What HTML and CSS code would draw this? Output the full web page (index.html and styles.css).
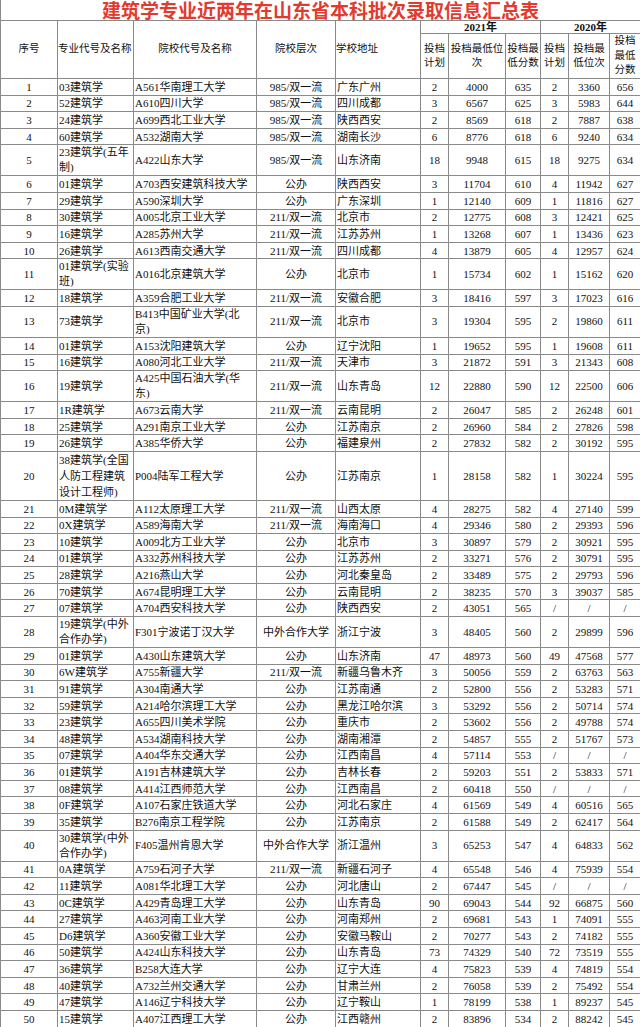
FILE: index.html
```html
<!DOCTYPE html>
<html lang="zh-CN">
<head>
<meta charset="utf-8">
<title>建筑学专业近两年在山东省本科批次录取信息汇总表</title>
<link rel="stylesheet" href="styles.css">
</head>
<body>
<table class="sheet">
<colgroup>
<col class="c-no"><col class="c-major"><col class="c-school"><col class="c-level"><col class="c-addr">
<col class="c-plan"><col class="c-rank"><col class="c-score">
<col class="c-plan"><col class="c-rank2"><col class="c-score2">
</colgroup>
<thead>
<tr class="title-row"><th colspan="11" class="title">建筑学专业近两年在山东省本科批次录取信息汇总表</th></tr>
<tr class="hd1">
<th rowspan="2">序号</th>
<th rowspan="2" class="l">专业代号及名称</th>
<th rowspan="2">院校代号及名称</th>
<th rowspan="2">院校层次</th>
<th rowspan="2" class="l">学校地址</th>
<th colspan="3" class="yr">2021年</th>
<th colspan="3" class="yr">2020年</th>
</tr>
<tr class="hd2">
<th>投档计划</th><th>投档最低位次</th><th>投档最低分数</th>
<th>投档计划</th><th>投档最低位次</th><th>投档最低分数</th>
</tr>
</thead>
<tbody>
<tr><td>1</td><td class="l">03建筑学</td><td class="l">A561华南理工大学</td><td>985/双一流</td><td class="l">广东广州</td><td>2</td><td>4000</td><td>635</td><td>2</td><td>3360</td><td>656</td></tr>
<tr><td>2</td><td class="l">52建筑学</td><td class="l">A610四川大学</td><td>985/双一流</td><td class="l">四川成都</td><td>3</td><td>6567</td><td>625</td><td>3</td><td>5983</td><td>644</td></tr>
<tr><td>3</td><td class="l">24建筑学</td><td class="l">A699西北工业大学</td><td>985/双一流</td><td class="l">陕西西安</td><td>2</td><td>8569</td><td>618</td><td>2</td><td>7887</td><td>638</td></tr>
<tr><td>4</td><td class="l">60建筑学</td><td class="l">A532湖南大学</td><td>985/双一流</td><td class="l">湖南长沙</td><td>6</td><td>8776</td><td>618</td><td>6</td><td>9240</td><td>634</td></tr>
<tr class="r2"><td>5</td><td class="l">23建筑学(五年制)</td><td class="l">A422山东大学</td><td>985/双一流</td><td class="l">山东济南</td><td>18</td><td>9948</td><td>615</td><td>18</td><td>9275</td><td>634</td></tr>
<tr><td>6</td><td class="l">01建筑学</td><td class="l">A703西安建筑科技大学</td><td>公办</td><td class="l">陕西西安</td><td>3</td><td>11704</td><td>610</td><td>4</td><td>11942</td><td>627</td></tr>
<tr><td>7</td><td class="l">29建筑学</td><td class="l">A590深圳大学</td><td>公办</td><td class="l">广东深圳</td><td>1</td><td>12140</td><td>609</td><td>1</td><td>11816</td><td>627</td></tr>
<tr><td>8</td><td class="l">30建筑学</td><td class="l">A005北京工业大学</td><td>211/双一流</td><td class="l">北京市</td><td>2</td><td>12775</td><td>608</td><td>3</td><td>12421</td><td>625</td></tr>
<tr><td>9</td><td class="l">16建筑学</td><td class="l">A285苏州大学</td><td>211/双一流</td><td class="l">江苏苏州</td><td>1</td><td>13268</td><td>607</td><td>1</td><td>13436</td><td>623</td></tr>
<tr><td>10</td><td class="l">26建筑学</td><td class="l">A613西南交通大学</td><td>211/双一流</td><td class="l">四川成都</td><td>4</td><td>13879</td><td>605</td><td>4</td><td>12957</td><td>624</td></tr>
<tr class="r2"><td>11</td><td class="l">01建筑学(实验班)</td><td class="l">A016北京建筑大学</td><td>公办</td><td class="l">北京市</td><td>1</td><td>15734</td><td>602</td><td>1</td><td>15162</td><td>620</td></tr>
<tr><td>12</td><td class="l">18建筑学</td><td class="l">A359合肥工业大学</td><td>211/双一流</td><td class="l">安徽合肥</td><td>3</td><td>18416</td><td>597</td><td>3</td><td>17023</td><td>616</td></tr>
<tr class="r2"><td>13</td><td class="l">73建筑学</td><td class="l">B413中国矿业大学(北京)</td><td>211/双一流</td><td class="l">北京市</td><td>3</td><td>19304</td><td>595</td><td>2</td><td>19860</td><td>611</td></tr>
<tr><td>14</td><td class="l">01建筑学</td><td class="l">A153沈阳建筑大学</td><td>公办</td><td class="l">辽宁沈阳</td><td>1</td><td>19652</td><td>595</td><td>1</td><td>19608</td><td>611</td></tr>
<tr><td>15</td><td class="l">16建筑学</td><td class="l">A080河北工业大学</td><td>211/双一流</td><td class="l">天津市</td><td>3</td><td>21872</td><td>591</td><td>3</td><td>21343</td><td>608</td></tr>
<tr class="r2"><td>16</td><td class="l">19建筑学</td><td class="l">A425中国石油大学(华东)</td><td>211/双一流</td><td class="l">山东青岛</td><td>12</td><td>22880</td><td>590</td><td>12</td><td>22500</td><td>606</td></tr>
<tr><td>17</td><td class="l">1R建筑学</td><td class="l">A673云南大学</td><td>211/双一流</td><td class="l">云南昆明</td><td>2</td><td>26047</td><td>585</td><td>2</td><td>26248</td><td>601</td></tr>
<tr><td>18</td><td class="l">25建筑学</td><td class="l">A291南京工业大学</td><td>公办</td><td class="l">江苏南京</td><td>2</td><td>26960</td><td>584</td><td>2</td><td>27826</td><td>598</td></tr>
<tr><td>19</td><td class="l">26建筑学</td><td class="l">A385华侨大学</td><td>公办</td><td class="l">福建泉州</td><td>2</td><td>27832</td><td>582</td><td>2</td><td>30192</td><td>595</td></tr>
<tr class="r3"><td>20</td><td class="l">38建筑学(全国人防工程建筑设计工程师)</td><td class="l">P004陆军工程大学</td><td>公办</td><td class="l">江苏南京</td><td>1</td><td>28158</td><td>582</td><td>1</td><td>30224</td><td>595</td></tr>
<tr><td>21</td><td class="l">0M建筑学</td><td class="l">A112太原理工大学</td><td>211/双一流</td><td class="l">山西太原</td><td>4</td><td>28275</td><td>582</td><td>4</td><td>27140</td><td>599</td></tr>
<tr><td>22</td><td class="l">0X建筑学</td><td class="l">A589海南大学</td><td>211/双一流</td><td class="l">海南海口</td><td>4</td><td>29346</td><td>580</td><td>2</td><td>29393</td><td>596</td></tr>
<tr><td>23</td><td class="l">10建筑学</td><td class="l">A009北方工业大学</td><td>公办</td><td class="l">北京市</td><td>3</td><td>30897</td><td>579</td><td>2</td><td>30921</td><td>595</td></tr>
<tr><td>24</td><td class="l">01建筑学</td><td class="l">A332苏州科技大学</td><td>公办</td><td class="l">江苏苏州</td><td>2</td><td>33271</td><td>576</td><td>2</td><td>30791</td><td>595</td></tr>
<tr><td>25</td><td class="l">28建筑学</td><td class="l">A216燕山大学</td><td>公办</td><td class="l">河北秦皇岛</td><td>2</td><td>33489</td><td>575</td><td>2</td><td>29793</td><td>596</td></tr>
<tr><td>26</td><td class="l">70建筑学</td><td class="l">A674昆明理工大学</td><td>公办</td><td class="l">云南昆明</td><td>2</td><td>38235</td><td>570</td><td>3</td><td>39037</td><td>585</td></tr>
<tr><td>27</td><td class="l">07建筑学</td><td class="l">A704西安科技大学</td><td>公办</td><td class="l">陕西西安</td><td>2</td><td>43051</td><td>565</td><td>/</td><td>/</td><td>/</td></tr>
<tr class="r2"><td>28</td><td class="l">19建筑学(中外合作办学)</td><td class="l">F301宁波诺丁汉大学</td><td>中外合作大学</td><td class="l">浙江宁波</td><td>3</td><td>48405</td><td>560</td><td>2</td><td>29899</td><td>596</td></tr>
<tr><td>29</td><td class="l">01建筑学</td><td class="l">A430山东建筑大学</td><td>公办</td><td class="l">山东济南</td><td>47</td><td>48973</td><td>560</td><td>49</td><td>47568</td><td>577</td></tr>
<tr><td>30</td><td class="l">6W建筑学</td><td class="l">A755新疆大学</td><td>211/双一流</td><td class="l">新疆乌鲁木齐</td><td>3</td><td>50056</td><td>559</td><td>2</td><td>63763</td><td>563</td></tr>
<tr><td>31</td><td class="l">91建筑学</td><td class="l">A304南通大学</td><td>公办</td><td class="l">江苏南通</td><td>2</td><td>52800</td><td>556</td><td>2</td><td>53283</td><td>571</td></tr>
<tr><td>32</td><td class="l">59建筑学</td><td class="l">A214哈尔滨理工大学</td><td>公办</td><td class="l">黑龙江哈尔滨</td><td>3</td><td>53292</td><td>556</td><td>2</td><td>50714</td><td>574</td></tr>
<tr><td>33</td><td class="l">23建筑学</td><td class="l">A655四川美术学院</td><td>公办</td><td class="l">重庆市</td><td>2</td><td>53602</td><td>556</td><td>2</td><td>49788</td><td>574</td></tr>
<tr><td>34</td><td class="l">48建筑学</td><td class="l">A534湖南科技大学</td><td>公办</td><td class="l">湖南湘潭</td><td>2</td><td>54857</td><td>555</td><td>2</td><td>51767</td><td>573</td></tr>
<tr><td>35</td><td class="l">07建筑学</td><td class="l">A404华东交通大学</td><td>公办</td><td class="l">江西南昌</td><td>4</td><td>57114</td><td>553</td><td>/</td><td>/</td><td>/</td></tr>
<tr><td>36</td><td class="l">01建筑学</td><td class="l">A191吉林建筑大学</td><td>公办</td><td class="l">吉林长春</td><td>2</td><td>59203</td><td>551</td><td>2</td><td>53833</td><td>571</td></tr>
<tr><td>37</td><td class="l">08建筑学</td><td class="l">A414江西师范大学</td><td>公办</td><td class="l">江西南昌</td><td>2</td><td>60418</td><td>550</td><td>/</td><td>/</td><td>/</td></tr>
<tr><td>38</td><td class="l">0F建筑学</td><td class="l">A107石家庄铁道大学</td><td>公办</td><td class="l">河北石家庄</td><td>4</td><td>61569</td><td>549</td><td>4</td><td>60516</td><td>565</td></tr>
<tr><td>39</td><td class="l">35建筑学</td><td class="l">B276南京工程学院</td><td>公办</td><td class="l">江苏南京</td><td>2</td><td>61588</td><td>549</td><td>2</td><td>62417</td><td>564</td></tr>
<tr class="r2"><td>40</td><td class="l">30建筑学(中外合作办学)</td><td class="l">F405温州肯恩大学</td><td>中外合作大学</td><td class="l">浙江温州</td><td>3</td><td>65253</td><td>547</td><td>4</td><td>64833</td><td>562</td></tr>
<tr><td>41</td><td class="l">0A建筑学</td><td class="l">A759石河子大学</td><td>211/双一流</td><td class="l">新疆石河子</td><td>4</td><td>65548</td><td>546</td><td>4</td><td>75939</td><td>554</td></tr>
<tr><td>42</td><td class="l">11建筑学</td><td class="l">A081华北理工大学</td><td>公办</td><td class="l">河北唐山</td><td>2</td><td>67447</td><td>545</td><td>/</td><td>/</td><td>/</td></tr>
<tr><td>43</td><td class="l">0C建筑学</td><td class="l">A429青岛理工大学</td><td>公办</td><td class="l">山东青岛</td><td>90</td><td>69043</td><td>544</td><td>92</td><td>66875</td><td>560</td></tr>
<tr><td>44</td><td class="l">27建筑学</td><td class="l">A463河南工业大学</td><td>公办</td><td class="l">河南郑州</td><td>2</td><td>69681</td><td>543</td><td>1</td><td>74091</td><td>555</td></tr>
<tr><td>45</td><td class="l">D6建筑学</td><td class="l">A360安徽工业大学</td><td>公办</td><td class="l">安徽马鞍山</td><td>2</td><td>70277</td><td>543</td><td>2</td><td>74182</td><td>555</td></tr>
<tr><td>46</td><td class="l">50建筑学</td><td class="l">A424山东科技大学</td><td>公办</td><td class="l">山东青岛</td><td>73</td><td>74329</td><td>540</td><td>72</td><td>73519</td><td>555</td></tr>
<tr><td>47</td><td class="l">36建筑学</td><td class="l">B258大连大学</td><td>公办</td><td class="l">辽宁大连</td><td>4</td><td>75823</td><td>539</td><td>4</td><td>74819</td><td>554</td></tr>
<tr><td>48</td><td class="l">40建筑学</td><td class="l">A732兰州交通大学</td><td>公办</td><td class="l">甘肃兰州</td><td>2</td><td>76058</td><td>539</td><td>2</td><td>75492</td><td>554</td></tr>
<tr><td>49</td><td class="l">47建筑学</td><td class="l">A146辽宁科技大学</td><td>公办</td><td class="l">辽宁鞍山</td><td>1</td><td>78199</td><td>538</td><td>1</td><td>89237</td><td>545</td></tr>
<tr><td>50</td><td class="l">15建筑学</td><td class="l">A407江西理工大学</td><td>公办</td><td class="l">江西赣州</td><td>2</td><td>83896</td><td>534</td><td>2</td><td>88242</td><td>545</td></tr>
</tbody>
</table>
</body>
</html>
```
FILE: styles.css
```css
html, body {
  margin: 0;
  padding: 0;
  background: #ffffff;
}

body {
  font-family: "Liberation Serif", "Noto Sans CJK SC", serif;
  font-size: 11px;
  color: #111111;
}

.sheet {
  width: 640px;
  table-layout: fixed;
  border-collapse: collapse;
}

.c-no { width: 57px; }
.c-major { width: 76px; }
.c-school { width: 123px; }
.c-level { width: 79px; }
.c-addr { width: 85px; }
.c-plan { width: 28px; }
.c-rank { width: 57px; }
.c-score { width: 35px; }
.c-rank2 { width: 41px; }
.c-score2 { width: 31px; }

.sheet th,
.sheet td {
  border: 1px solid #8a8a8a;
  padding: 0 1px;
  text-align: center;
  vertical-align: middle;
  font-weight: normal;
  overflow: hidden;
}

.sheet td.l,
.sheet th.l {
  text-align: left;
}

.sheet th.l {
  padding: 0;
}

.sheet td:nth-child(3) {
  padding-right: 3px;
}

.sheet .title-row th.title {
  border-top: none;
  height: 19px;
  padding: 0;
  font-family: "Noto Sans CJK SC", sans-serif;
  font-size: 19px;
  line-height: 20px;
  font-weight: bold;
  color: #e23a2f;
  text-align: center;
}

.hd1 th,
.hd2 th {
  font-size: 10.5px;
  line-height: 14.5px;
  color: #111111;
}

.hd1 th.yr {
  height: 12px;
  line-height: 12px;
  font-weight: bold;
  font-size: 11px;
}

.hd2 th {
  height: 44px;
  padding: 0 1px;
}

.sheet tbody td {
  height: 15.6px;
  line-height: 14px;
}

.sheet tbody tr.r2 td {
  height: 30px;
  line-height: 15px;
}

.sheet tbody tr.r3 td {
  height: 47.5px;
  line-height: 16px;
}
```
